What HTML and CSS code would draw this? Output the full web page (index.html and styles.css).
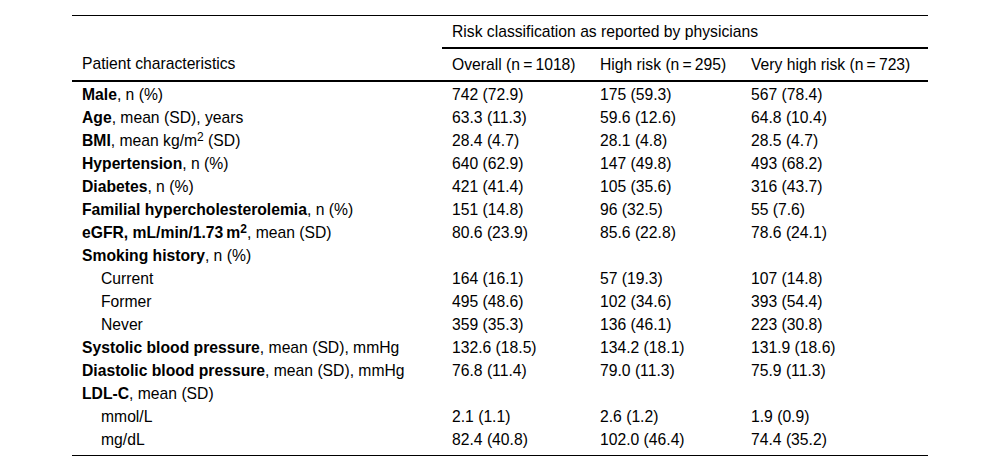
FILE: index.html
```html
<!DOCTYPE html>
<html lang="en">
<head>
<meta charset="utf-8">
<title>Patient characteristics</title>
<link rel="stylesheet" href="styles.css">
</head>
<body>
<div class="wrap">
<table class="data">
  <colgroup>
    <col class="c1"><col class="c2"><col class="c3"><col class="c4">
  </colgroup>
  <thead>
    <tr class="h1">
      <th rowspan="2" class="lab">Patient characteristics</th>
      <th colspan="3" class="group">Risk classification as reported by physicians</th>
    </tr>
    <tr class="h2">
      <th>Overall (n&#8201;=&#8201;1018)</th>
      <th>High risk (n&#8201;=&#8201;295)</th>
      <th>Very high risk (n&#8201;=&#8201;723)</th>
    </tr>
  </thead>
  <tbody>
    <tr class="first"><td><b>Male</b>, n (%)</td><td>742 (72.9)</td><td>175 (59.3)</td><td>567 (78.4)</td></tr>
    <tr><td><b>Age</b>, mean (SD), years</td><td>63.3 (11.3)</td><td>59.6 (12.6)</td><td>64.8 (10.4)</td></tr>
    <tr><td><b>BMI</b>, mean kg/m<sup>2</sup> (SD)</td><td>28.4 (4.7)</td><td>28.1 (4.8)</td><td>28.5 (4.7)</td></tr>
    <tr><td><b>Hypertension</b>, n (%)</td><td>640 (62.9)</td><td>147 (49.8)</td><td>493 (68.2)</td></tr>
    <tr><td><b>Diabetes</b>, n (%)</td><td>421 (41.4)</td><td>105 (35.6)</td><td>316 (43.7)</td></tr>
    <tr><td><b>Familial hypercholesterolemia</b>, n (%)</td><td>151 (14.8)</td><td>96 (32.5)</td><td>55 (7.6)</td></tr>
    <tr><td><b>eGFR, mL/min/1.73&#8201;m<sup>2</sup></b>, mean (SD)</td><td>80.6 (23.9)</td><td>85.6 (22.8)</td><td>78.6 (24.1)</td></tr>
    <tr><td><b>Smoking history</b>, n (%)</td><td></td><td></td><td></td></tr>
    <tr><td class="sub">Current</td><td>164 (16.1)</td><td>57 (19.3)</td><td>107 (14.8)</td></tr>
    <tr><td class="sub">Former</td><td>495 (48.6)</td><td>102 (34.6)</td><td>393 (54.4)</td></tr>
    <tr><td class="sub">Never</td><td>359 (35.3)</td><td>136 (46.1)</td><td>223 (30.8)</td></tr>
    <tr><td><b>Systolic blood pressure</b>, mean (SD), mmHg</td><td>132.6 (18.5)</td><td>134.2 (18.1)</td><td>131.9 (18.6)</td></tr>
    <tr><td><b>Diastolic blood pressure</b>, mean (SD), mmHg</td><td>76.8 (11.4)</td><td>79.0 (11.3)</td><td>75.9 (11.3)</td></tr>
    <tr><td><b>LDL-C</b>, mean (SD)</td><td></td><td></td><td></td></tr>
    <tr><td class="sub">mmol/L</td><td>2.1 (1.1)</td><td>2.6 (1.2)</td><td>1.9 (0.9)</td></tr>
    <tr class="last"><td class="sub">mg/dL</td><td>82.4 (40.8)</td><td>102.0 (46.4)</td><td>74.4 (35.2)</td></tr>
  </tbody>
</table>
</div>
</body>
</html>
```
FILE: styles.css
```css
html, body {
  margin: 0;
  padding: 0;
  background: #fff;
}
body {
  font-family: "Liberation Sans", Arial, sans-serif;
  font-size: 15.7px;
  color: #000;
}
.wrap {
  padding: 15px 72px 0 72px;
}
.data {
  width: 856px;
  border-collapse: collapse;
  table-layout: fixed;
  border-top: 1px solid #000;
  border-bottom: 1px solid #000;
}
.c1 { width: 370px; }
.c2 { width: 148px; }
.c3 { width: 151px; }
.c4 { width: 187px; }
th {
  font-weight: normal;
  text-align: left;
  padding: 0 10px;
  line-height: 18px;
  white-space: nowrap;
}
.h1 th {
  height: 31px;
}
.h1 th.lab {
  vertical-align: bottom;
  padding-bottom: 7px;
  border-bottom: 2px solid #000;
}
.h1 th.group {
  vertical-align: middle;
  border-bottom: 2px solid #000;
}
.h2 th {
  height: 31px;
  vertical-align: middle;
  border-bottom: 2px solid #000;
}
td {
  padding: 2px 10px;
  line-height: 19px;
  height: 19px;
  vertical-align: middle;
  white-space: nowrap;
}
td.sub {
  padding-left: 29px;
}
.first td {
  padding-top: 3px;
}
.last td {
  padding-bottom: 6px;
}
sup {
  font-size: 12px;
  line-height: 0;
  vertical-align: 5px;
}
```
